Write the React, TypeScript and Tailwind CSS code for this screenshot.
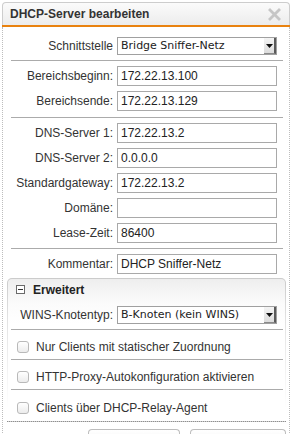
import React from "react";

const FONT = { fontFamily: '"Liberation Sans", Arial, sans-serif' };
const DV = { fontFamily: '"DejaVu Sans", Verdana, sans-serif' };

function TextInput({ value }: { value: string }) {
  return (
    <input
      readOnly
      value={value}
      className="w-[160px] h-[20px] border border-[#a9a9a9] bg-white px-[3px] text-[12px] text-[#222] outline-none"
      style={FONT}
    />
  );
}

function FakeSelect({ value }: { value: string }) {
  return (
    <div className="relative w-[160px] h-[18px] border border-[#a0a0a0] bg-white flex items-center pl-[3px] text-[11px] text-[#222]" style={DV}>
      <span>{value}</span>
      <div className="absolute right-0 top-0 bottom-0 w-[12px] flex items-center justify-center bg-[linear-gradient(to_bottom,#f4f4f4,#dcdcdc)] border-r-2 border-b border-r-[#5a5a5a] border-b-[#8a8a8a]">
        <svg width="7" height="4" viewBox="0 0 7 4">
          <polygon points="0,0 7,0 3.5,4" fill="#111" />
        </svg>
      </div>
    </div>
  );
}

function Row({ label, children }: { label: string; children: React.ReactNode }) {
  return (
    <div className="flex items-center">
      <div className="w-[106px] pr-[4px] text-right text-[12px] text-[#333] whitespace-nowrap">{label}</div>
      {children}
    </div>
  );
}

function Sep() {
  return <div className="h-px bg-[#ababab]" />;
}

function Check({ label }: { label: string }) {
  return (
    <div className="flex items-center pl-[6px] pt-[4px] h-full">
      <div className="w-[12px] h-[12px] rounded-[3px] border border-[#b9b9b9] bg-[linear-gradient(to_bottom,#ffffff,#ececec)]" />
      <span className="ml-[7px] text-[12px] text-[#333] whitespace-nowrap">{label}</span>
    </div>
  );
}

export default function App() {
  return (
    <div className="w-[292px] h-[434px] overflow-hidden bg-white" style={FONT}>
      <div className="ml-[2px] mt-[2px] w-[288px] h-[432px] flex flex-col">
        {/* header */}
        <div className="h-[23px] shrink-0 rounded-t-[4px] border border-b-0 border-[#cdcdcd] bg-[linear-gradient(to_bottom,#fbfbfb,#ececec)] flex items-center justify-between pl-[7px] pr-[8px]">
          <span className="text-[12px] font-bold text-[#333]">DHCP-Server bearbeiten</span>
          <svg width="13" height="13" viewBox="0 0 13 13" className="mt-[1px]">
            <path d="M2 2 L11 11 M11 2 L2 11" stroke="#c6c6c6" strokeWidth="2.8" strokeLinecap="square" />
          </svg>
        </div>
        <div className="h-[2px] shrink-0 bg-[#e9820f]" />
        {/* body */}
        <div className="flex-1 border-x border-dotted border-[#bdbdbd] pl-[8px] pr-[6px] pt-[10px]">
          <Row label="Schnittstelle">
            <FakeSelect value="Bridge Sniffer-Netz" />
          </Row>
          <div className="h-[5px]" />
          <Sep />
          <div className="flex flex-col gap-[5px] pt-[5px] pb-[6px]">
            <Row label="Bereichsbeginn:">
              <TextInput value="172.22.13.100" />
            </Row>
            <Row label="Bereichsende:">
              <TextInput value="172.22.13.129" />
            </Row>
          </div>
          <Sep />
          <div className="flex flex-col gap-[5px] pt-[5px] pb-[5px]">
            <Row label="DNS-Server 1:">
              <TextInput value="172.22.13.2" />
            </Row>
            <Row label="DNS-Server 2:">
              <TextInput value="0.0.0.0" />
            </Row>
            <Row label="Standardgateway:">
              <TextInput value="172.22.13.2" />
            </Row>
            <Row label="Domäne:">
              <TextInput value="" />
            </Row>
            <Row label="Lease-Zeit:">
              <TextInput value="86400" />
            </Row>
          </div>
          <Sep />
          <div className="pt-[5px]">
            <Row label="Kommentar:">
              <TextInput value="DHCP Sniffer-Netz" />
            </Row>
          </div>
          {/* Erweitert panel */}
          <div className="mt-[4px] -ml-[4px] -mr-[3px] rounded-t-[5px] p-px pb-0 bg-[linear-gradient(to_bottom,#cbcbcb,#e2e2e2_40px,#ffffff_130px)] border-b border-dotted border-[#8f8f8f]">
            <div className="rounded-t-[4px] bg-[linear-gradient(to_bottom,#eeeeee,#fbfbfb_24px,#ffffff_45px)] pl-[3px] pr-[2px]">
              <div className="h-[21px] flex items-center pl-[5px]">
                <div className="w-[9px] h-[9px] border border-[#6a6a6a] bg-white flex items-center justify-center">
                  <div className="w-[5px] h-px bg-[#333]" />
                </div>
                <span className="ml-[8px] text-[12px] font-bold text-[#222]">Erweitert</span>
              </div>
              <div className="pt-[6px] pb-[5px]">
                <Row label="WINS-Knotentyp:">
                  <FakeSelect value="B-Knoten (kein WINS)" />
                </Row>
              </div>
              <Sep />
              <div className="h-[29px]">
                <Check label="Nur Clients mit statischer Zuordnung" />
              </div>
              <Sep />
              <div className="h-[29px]">
                <Check label="HTTP-Proxy-Autokonfiguration aktivieren" />
              </div>
              <Sep />
              <div className="h-[31px]">
                <Check label="Clients über DHCP-Relay-Agent" />
              </div>
            </div>
          </div>
          <div className="flex justify-end gap-[10px] mt-[7px]">
            <div className="w-[92px] h-[20px] rounded-t-[4px] border border-b-0 border-[#bdbdbd] bg-[linear-gradient(to_bottom,#ffffff,#f0f0f0)]" />
            <div className="w-[96px] h-[20px] rounded-t-[4px] border border-b-0 border-[#bdbdbd] bg-[linear-gradient(to_bottom,#ffffff,#f0f0f0)] -mr-[3px]" />
          </div>
        </div>
      </div>
    </div>
  );
}
